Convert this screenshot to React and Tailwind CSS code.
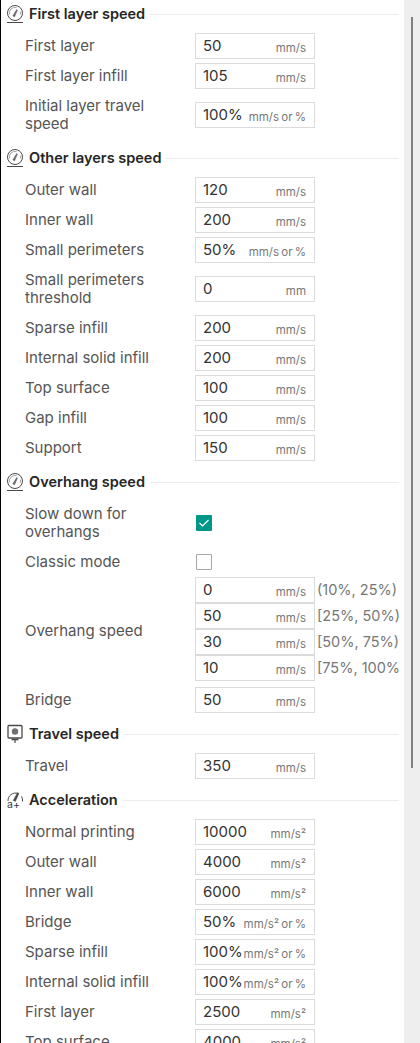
const FONT = "font-['Inter','Noto_Sans',sans-serif]";

function GaugeIcon() {
  return (
    <svg width="18" height="20" viewBox="0 0 18 20" fill="none" stroke="#4a4a4a" className="shrink-0">
      <circle cx="9" cy="9" r="7.5" strokeWidth="1" />
      <path d="M1 18.5h16" strokeWidth="1" />
      <path d="M6.8 12l3.8-6.4 0.9 0.5-2.9 6.6z" fill="#6a6a6a" strokeWidth="0.4" />
      <path d="M3.6 10.5a5.6 5.6 0 0 1 7-6.8M14.2 7.5a5.6 5.6 0 0 1 0.2 3" stroke="#8a8a8a" strokeWidth="0.8" />
    </svg>
  );
}

function TravelIcon() {
  return (
    <svg width="18" height="20" viewBox="0 0 18 20" fill="none" stroke="#4a4a4a" className="shrink-0">
      <rect x="2" y="1.5" width="14" height="12.5" rx="1" strokeWidth="1.3" />
      <circle cx="9" cy="7.5" r="3.2" fill="#707070" stroke="none" />
      <path d="M5.5 15.5h7" strokeWidth="1.6" />
      <path d="M9 16v3" strokeWidth="1.2" />
    </svg>
  );
}

function AccelIcon() {
  return (
    <svg width="18" height="20" viewBox="0 0 18 20" fill="none" stroke="#4a4a4a" className="shrink-0">
      <path d="M2 11a7.5 7.5 0 0 1 10-7.5M15.5 6.5a7.5 7.5 0 0 1 1 5" strokeWidth="1" />
      <path d="M7.2 10.5l4.3-8 1.5 0.9-3.6 8z" fill="#4a4a4a" strokeWidth="0.4" />
      <text x="1" y="18" fontSize="10.5" fill="#3a3a3a" stroke="none">a+</text>
    </svg>
  );
}

function Header({ icon, title }) {
  return (
    <div className="flex h-[28px] items-center">
      <div className="ml-[6px] flex w-[23px]">{icon}</div>
      <span className="text-[14.5px] leading-[18px] font-semibold text-[#262626]">{title}</span>
      <div className="ml-[5px] h-px flex-1 bg-[#ececec]" />
    </div>
  );
}

function Field({ value, unit }) {
  return (
    <div className="flex h-[26px] w-[120px] shrink-0 items-center justify-between border border-[#dbdbdb] bg-white pr-[8px] pl-[7px]">
      <span className="text-[15px] leading-[18px] text-[#333333]">{value}</span>
      <span className="pt-[3px] text-[11.5px] leading-[14px] [word-spacing:-1px] text-[#777777]">{unit}</span>
    </div>
  );
}

function Label({ children }) {
  return <div className="w-[195px] shrink-0 pl-[25px] text-[15px] leading-[18px] text-[#555555]">{children}</div>;
}

function Row({ label, value, unit, tall }) {
  return (
    <div className={`mt-[4px] flex items-center ${tall ? 'h-[44px]' : 'h-[26px]'}`}>
      <Label>{label}</Label>
      <Field value={value} unit={unit} />
    </div>
  );
}

function CheckRow({ label, checked, tall }) {
  return (
    <div className={`mt-[4px] flex items-center ${tall ? 'h-[44px]' : 'h-[26px]'}`}>
      <Label>{label}</Label>
      {checked ? (
        <div className="ml-[1px] flex h-[16px] w-[16px] items-center justify-center rounded-[1px] bg-[#009688]">
          <svg width="12" height="12" viewBox="0 0 12 12" fill="none" stroke="#fff" strokeWidth="1.2">
            <path d="M1.5 6l3 3 6-6" />
          </svg>
        </div>
      ) : (
        <div className="ml-[1px] h-[16px] w-[16px] rounded-[1px] border border-[#a8a8a8] bg-white" />
      )}
    </div>
  );
}

function Section({ icon, title, children }) {
  return (
    <section className="mb-[7px]">
      <Header icon={icon} title={title} />
      <div className="pt-px">{children}</div>
    </section>
  );
}

const overhang = [
  ['0', '(10%, 25%)'],
  ['50', '[25%, 50%)'],
  ['30', '[50%, 75%)'],
  ['10', '[75%, 100%)'],
];

export default function App() {
  return (
    <div className={`flex h-[1043px] w-[420px] overflow-hidden bg-white ${FONT}`}>
      <div className="w-px shrink-0 bg-black" />
      <main className="w-[398px] shrink-0 overflow-hidden">
        <div className="-ml-px">
          <Section icon={<GaugeIcon />} title="First layer speed">
            <Row label="First layer" value="50" unit="mm/s" />
            <Row label="First layer infill" value="105" unit="mm/s" />
            <Row label={<>Initial layer travel<br />speed</>} value="100%" unit="mm/s or %" tall />
          </Section>

          <Section icon={<GaugeIcon />} title="Other layers speed">
            <Row label="Outer wall" value="120" unit="mm/s" />
            <Row label="Inner wall" value="200" unit="mm/s" />
            <Row label="Small perimeters" value="50%" unit="mm/s or %" />
            <Row label={<>Small perimeters<br />threshold</>} value="0" unit="mm" tall />
            <Row label="Sparse infill" value="200" unit="mm/s" />
            <Row label="Internal solid infill" value="200" unit="mm/s" />
            <Row label="Top surface" value="100" unit="mm/s" />
            <Row label="Gap infill" value="100" unit="mm/s" />
            <Row label="Support" value="150" unit="mm/s" />
          </Section>

          <Section icon={<GaugeIcon />} title="Overhang speed">
            <CheckRow label={<>Slow down for<br />overhangs</>} checked tall />
            <CheckRow label="Classic mode" />
            <div className="mt-[2px] flex items-center">
              <Label><div className="pt-[3px]">Overhang speed</div></Label>
              <div className="flex flex-col">
                {overhang.map(([value, range]) => (
                  <div key={range} className="flex items-center">
                    <Field value={value} unit="mm/s" />
                    <span className="ml-[2px] text-[14.5px] leading-[18px] whitespace-nowrap text-[#777777]">{range}</span>
                  </div>
                ))}
              </div>
            </div>
            <div className="mt-[6px] flex h-[26px] items-center">
              <Label>Bridge</Label>
              <Field value="50" unit="mm/s" />
            </div>
          </Section>

          <Section icon={<TravelIcon />} title="Travel speed">
            <Row label="Travel" value="350" unit="mm/s" />
          </Section>

          <Section icon={<AccelIcon />} title="Acceleration">
            <Row label="Normal printing" value="10000" unit="mm/s²" />
            <Row label="Outer wall" value="4000" unit="mm/s²" />
            <Row label="Inner wall" value="6000" unit="mm/s²" />
            <Row label="Bridge" value="50%" unit="mm/s² or %" />
            <Row label="Sparse infill" value="100%" unit="mm/s² or %" />
            <Row label="Internal solid infill" value="100%" unit="mm/s² or %" />
            <Row label="First layer" value="2500" unit="mm/s²" />
            <Row label="Top surface" value="4000" unit="mm/s²" />
          </Section>
        </div>
      </main>
      <div className="ml-[5px] h-full w-[16px] shrink-0 bg-[#eeeeee] pt-[17px] pl-[7px]">
        <div className="h-[751px] w-[2px] bg-[#808080]" />
      </div>
    </div>
  );
}
